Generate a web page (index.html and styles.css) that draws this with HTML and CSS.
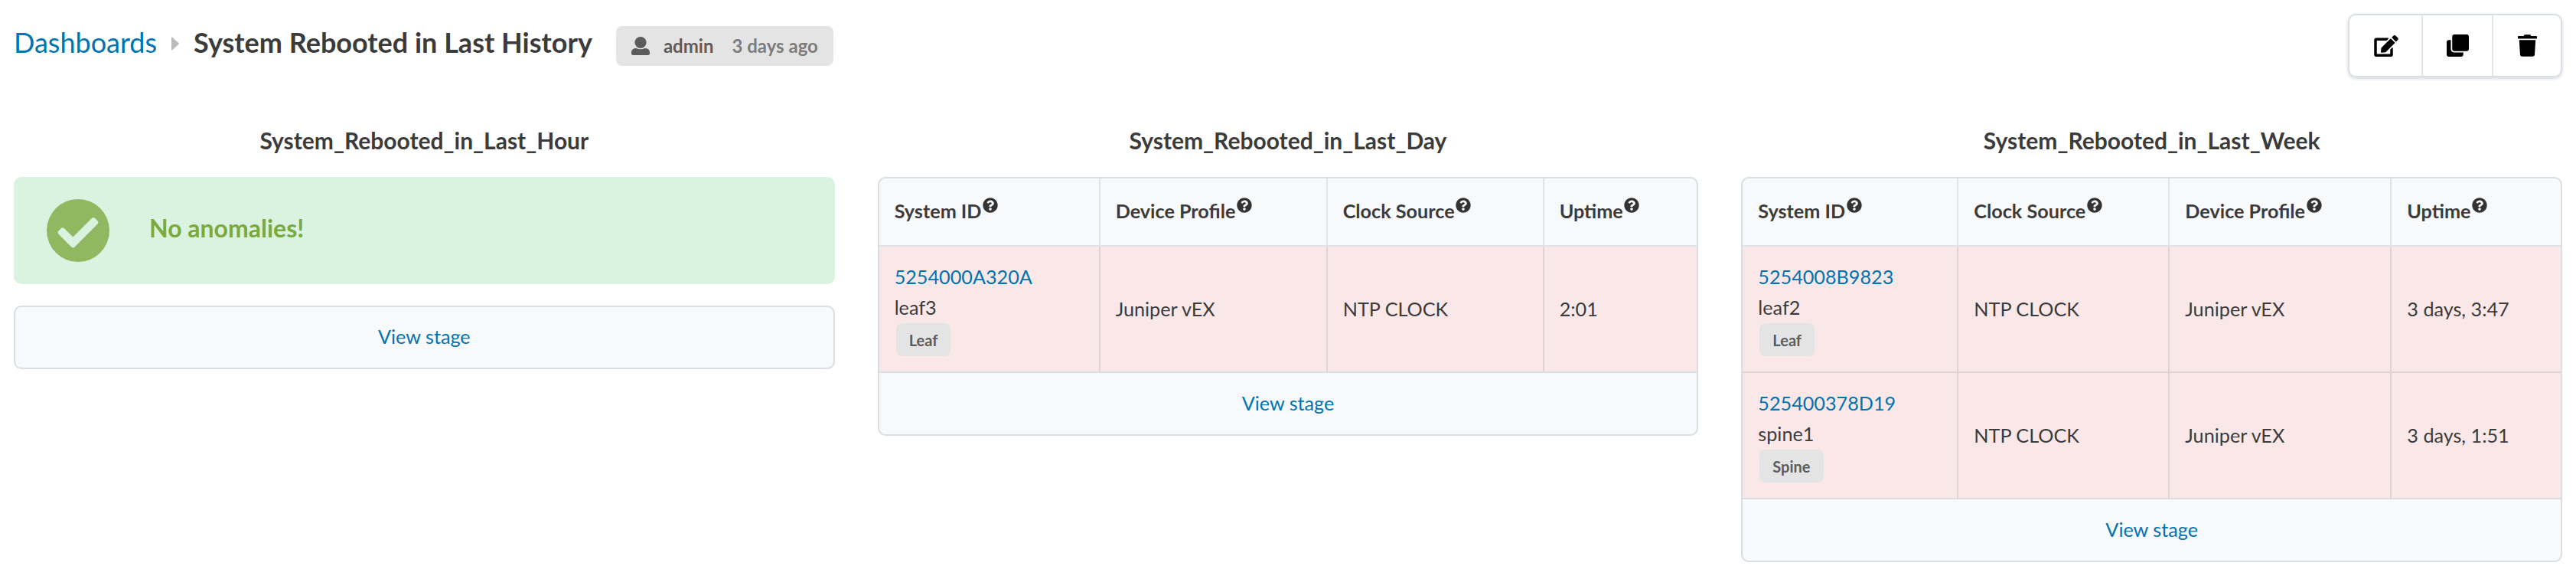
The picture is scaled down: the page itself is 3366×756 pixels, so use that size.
FILE: index.html
```html
<!DOCTYPE html>
<html lang="en">
<head>
<meta charset="utf-8">
<title>System Rebooted in Last History</title>
<link rel="stylesheet" href="styles.css">
</head>
<body>
<svg class="sprite" aria-hidden="true">
  <symbol id="help" viewBox="0 0 512 512"><path d="M504 256c0 136.997-111.043 248-248 248S8 392.997 8 256C8 119.083 119.043 8 256 8s248 111.083 248 248zM262.655 90c-54.497 0-89.255 22.957-116.549 63.758-3.536 5.286-2.353 12.415 2.715 16.258l34.699 26.31c5.205 3.947 12.621 3.008 16.665-2.122 17.864-22.658 30.113-35.797 57.303-35.797 20.429 0 45.698 13.148 45.698 32.958 0 14.976-12.363 22.667-32.534 33.976C247.128 238.528 216 254.941 216 296v4c0 6.627 5.373 12 12 12h56c6.627 0 12-5.373 12-12v-1.333c0-28.462 83.186-29.647 83.186-106.667 0-58.002-60.165-102-116.531-102zM256 338c-25.365 0-46 20.635-46 46 0 25.364 20.635 46 46 46s46-20.636 46-46c0-25.365-20.635-46-46-46z"/></symbol>
</svg>
<header class="topbar">
  <div class="breadcrumb">
    <a class="crumb">Dashboards</a>
    <svg class="caret" viewBox="0 0 10 18"><path d="M0 1.2Q0-.3 1.2.7L9.4 8.2Q10.300 9 9.400 9.800L1.200 17.300Q0 18.300 0 16.800Z"/></svg>
    <h1>System Rebooted in Last History</h1>
    <div class="owner">
      <svg viewBox="0 0 24 24"><ellipse cx="12" cy="7.500" rx="7.600" ry="7.500"/><path d="M0 20.500Q0 15 6.500 15Q9 16.200 12 16.200T17.500 15Q24 15 24 20.500V22Q24 24 21.800 24H2.200Q0 24 0 22Z"/></svg>
      <span>admin</span><span class="when">3 days ago</span>
    </div>
  </div>
  <div class="actions">
    <button class="edit"><svg width="32" height="28" viewBox="0 0 576 512"><path d="M402.600 83.200l90.200 90.200c3.800 3.800 3.800 10 0 13.800L274.400 405.600l-92.800 10.300c-12.400 1.400-22.900-9.100-21.500-21.500l10.300-92.800L388.800 83.200c3.800-3.800 10-3.800 13.800 0zm162-22.900l-48.800-48.800c-15.200-15.200-39.900-15.200-55.200 0l-35.400 35.400c-3.800 3.800-3.800 10 0 13.800l90.200 90.200c3.800 3.800 10 3.800 13.800 0l35.400-35.400c15.200-15.300 15.200-40 0-55.200zM384 346.200V448H64V128h229.800c3.200 0 6.200-1.300 8.500-3.500l40-40c7.600-7.600 2.200-20.500-8.500-20.500H48C21.500 64 0 85.500 0 112v352c0 26.500 21.500 48 48 48h352c26.500 0 48-21.500 48-48V306.200c0-10.700-12.900-16-20.500-8.500l-40 40c-2.200 2.300-3.500 5.300-3.500 8.500z"/></svg></button>
    <button><svg width="29" height="29" viewBox="0 0 512 512"><path d="M464 0c26.510 0 48 21.490 48 48v288c0 26.510-21.490 48-48 48H176c-26.510 0-48-21.490-48-48V48c0-26.510 21.490-48 48-48h288M176 416c-44.112 0-80-35.888-80-80V128H48c-26.510 0-48 21.490-48 48v288c0 26.510 21.490 48 48 48h288c26.510 0 48-21.490 48-48v-48H176z"/></svg></button>
    <button><svg width="25" height="29" viewBox="0 0 448 512"><path d="M432 32H312l-9.400-18.700A24 24 0 0 0 281.100 0H166.800a23.720 23.720 0 0 0-21.400 13.300L136 32H16A16 16 0 0 0 0 48v32a16 16 0 0 0 16 16h416a16 16 0 0 0 16-16V48a16 16 0 0 0-16-16zM32 128l21.200 339a48 48 0 0 0 47.900 45h245.800a48 48 0 0 0 47.900-45L416 128z"/></svg></button>
  </div>
</header>
<main class="widgets">
  <section>
    <h2>System_Rebooted_in_Last_Hour</h2>
    <div class="ok"><svg viewBox="0 0 496 496"><path d="M496 248a248 248 0 1 1-496 0a248 248 0 0 1 496 0zM219.300 379.300l184-184c6.200-6.200 6.200-16.400 0-22.600l-22.600-22.600c-6.200-6.200-16.400-6.200-22.600 0L208 300.100l-70.100-70.100c-6.200-6.200-16.400-6.200-22.600 0l-22.600 22.600c-6.200 6.200-6.200 16.400 0 22.600l104 104c6.200 6.300 16.400 6.300 22.600.1z"/></svg><span>No anomalies!</span></div>
    <div class="box solo"><a class="stage">View stage</a></div>
  </section>
  <section>
    <h2>System_Rebooted_in_Last_Day</h2>
    <div class="box">
      <div class="grid day">
        <div class="th">System ID<svg><use href="#help"/></svg></div><div class="th">Device Profile<svg><use href="#help"/></svg></div><div class="th">Clock Source<svg><use href="#help"/></svg></div><div class="th">Uptime<svg><use href="#help"/></svg></div>
        <div class="td id"><a>5254000A320A</a><span>leaf3</span><b class="tag">Leaf</b></div><div class="td">Juniper vEX</div><div class="td">NTP CLOCK</div><div class="td">2:01</div>
      </div>
      <a class="stage">View stage</a>
    </div>
  </section>
  <section>
    <h2>System_Rebooted_in_Last_Week</h2>
    <div class="box">
      <div class="grid week">
        <div class="th">System ID<svg><use href="#help"/></svg></div><div class="th">Clock Source<svg><use href="#help"/></svg></div><div class="th">Device Profile<svg><use href="#help"/></svg></div><div class="th">Uptime<svg><use href="#help"/></svg></div>
        <div class="td id"><a>5254008B9823</a><span>leaf2</span><b class="tag">Leaf</b></div><div class="td">NTP CLOCK</div><div class="td">Juniper vEX</div><div class="td">3 days, 3:47</div>
        <div class="td id"><a>525400378D19</a><span>spine1</span><b class="tag">Spine</b></div><div class="td">NTP CLOCK</div><div class="td">Juniper vEX</div><div class="td">3 days, 1:51</div>
      </div>
      <a class="stage">View stage</a>
    </div>
  </section>
</main>
</body>
</html>
```
FILE: styles.css
```css
* { box-sizing: border-box; }
body { margin: 0; padding: 18px 18px 0; height: 756px; overflow: hidden; background: #fff; color: #3b3b3b; font: 25.2px/40px Lato, sans-serif; }
.sprite { position: absolute; width: 0; height: 0; }
h1, h2 { margin: 0; font-weight: 700; }
a { color: #0073b1; }
.topbar { display: flex; justify-content: space-between; height: 84px; }
.breadcrumb { display: flex; height: 76px; align-items: center; font-size: 36px; }
.crumb { height: 40px; margin-top: -2px; }
.caret { width: 10px; height: 18px; margin: 2px 19px 0 19px; fill: #b9b9b9; }
h1 { font-size: 36px; line-height: 40px; margin-top: -2px; }
.owner { display: flex; align-items: center; width: 284px; height: 52px; margin: 8px 0 0 31px; padding-left: 20px; border-radius: 8px; background: #e4e4e4; color: #5c5c5c; font-size: 24px; font-weight: 700; }
.owner svg { width: 24px; height: 24px; margin-right: 18px; fill: #5c5c5c; }
.when { margin-left: 24px; color: #7c7c7c; }
.actions { display: flex; width: 280px; height: 83px; border: 2px solid #d9dee5; border-radius: 10px; box-shadow: 0 2px 4px #d5dbe4; }
.actions button { display: flex; flex: 0 0 92px; align-items: center; justify-content: center; padding: 0; background: none; border: 0; border-right: 2px solid #e3e4e5; }
.actions .edit { flex-basis: 96px; padding-left: 2px; }
.actions button:last-child { flex: 1; border: 0; }
.widgets { display: grid; grid-template-columns: repeat(3, 1fr); column-gap: 56px; align-items: start; padding-top: 61px; }
h2 { height: 68px; font-size: 30px; line-height: 40px; text-align: center; }
.ok { display: flex; align-items: center; height: 140px; padding-left: 43px; border-radius: 10px; background: #daf3e1; color: #7aa93c; font-size: 32px; font-weight: 700; }
.ok svg { width: 82px; height: 82px; margin-right: 52px; fill: #8fb860; }
.ok span { padding-bottom: 6px; }
.box { overflow: hidden; border: 2px solid #d9dee5; border-radius: 10px; background: #f8f9fb; }
.solo { margin-top: 28px; }
.stage { display: block; height: 80px; line-height: 79px; text-align: center; }
.solo .stage { height: 79px; line-height: 76px; }
.grid { display: grid; border-bottom: 2px solid #d9dee5; }
.day { grid-template-columns: 287px 297px 283px 1fr; }
.week { grid-template-columns: 280px 276px 290px 1fr; }
.th, .td { padding: 0 20px; border-left: 2px solid #e1e3e6; }
.th { display: flex; align-items: center; height: 89px; padding-bottom: 3px; border-bottom: 2px solid #e1e3e6; font-weight: 700; }
.th svg { width: 20px; height: 20px; margin: 0 0 14px 1.5px; fill: #333; }
.td { display: flex; align-items: center; height: 163px; padding-bottom: 2px; background: #fae8e8; border-left-color: #e3d2d2; }
.th:nth-child(4n+1), .td:nth-child(4n+1) { border-left: 0; }
.id { flex-direction: column; align-items: flex-start; padding-top: 19px; }
.td:nth-child(n+9) { height: 165px; border-top: 2px solid #e3d2d2; }
.tag { height: 43px; margin: 1px 0 0 2px; padding: 0 17px; border-radius: 8px; background: #e4e4e4; color: #5c5c5c; font-size: 20px; line-height: 44px; }
```
